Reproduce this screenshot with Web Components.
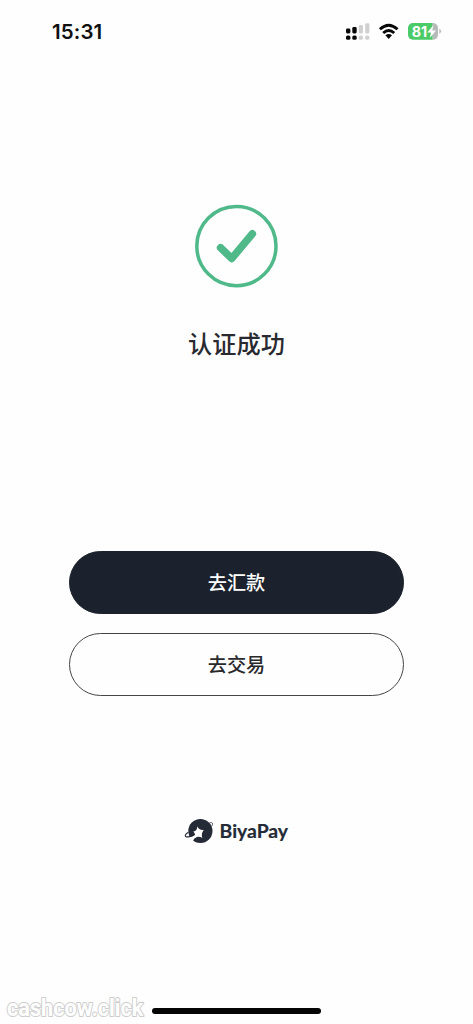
<!DOCTYPE html>
<html lang="zh-CN">
<head>
<meta charset="utf-8">
<title>BiyaPay</title>
<style>
html,body{margin:0;height:100%;background:#fefefe}
body{font-family:Inter,"Noto Sans CJK SC",sans-serif;overflow:hidden}
</style>
</head>
<body>
<result-screen></result-screen>
<script>
const define = (name, html) => customElements.define(name, class extends HTMLElement {
  constructor() {
    super();
    const t = document.createElement('template');
    t.innerHTML = html;
    this.attachShadow({mode: 'open'}).append(t.content.cloneNode(true));
  }
});

define('status-bar', `
<style>
:host{display:flex;justify-content:space-between;align-items:center;height:64px;padding:0 31px 0 52px;box-sizing:border-box}
time{font:600 20.5px/24px Inter,sans-serif;color:#111;letter-spacing:.1px}
.icons{display:flex;align-items:center}
svg{display:block}
</style>
<time>15:31</time>
<div class="icons">
<svg width="97" height="24" viewBox="345 20 97 24">
  <g fill="#080808"><rect x="346" y="28.5" width="4.4" height="5" rx="1.4"/><rect x="352.3" y="27" width="4.4" height="6.5" rx="1.4"/><rect x="346" y="35.4" width="4.4" height="4.4" rx="1.6"/><rect x="352.3" y="35.4" width="4.4" height="4.4" rx="1.6"/></g>
  <g fill="#d0d0d0"><rect x="358.8" y="25" width="4.2" height="8.5" rx="1.4"/><rect x="365.2" y="23.2" width="4.2" height="10.3" rx="1.4"/><rect x="358.8" y="35.4" width="4.2" height="4.4" rx="1.6"/><rect x="365.2" y="35.4" width="4.2" height="4.4" rx="1.6"/></g>
  <g fill="none" stroke="#080808" stroke-width="2.9"><path d="M379.9 29.3Q388.7 21 397.5 29.3"/><path d="M383.2 33Q388.7 28 394.2 33"/></g>
  <path d="M385.4 35.2Q388.7 32.6 392 35.2L388.7 38.9Z" fill="#080808"/>
  <clipPath id="c"><rect x="408" y="23" width="30" height="16.8" rx="5"/></clipPath>
  <g clip-path="url(#c)"><path fill="#4bca68" d="M408 23h24.7v17H408z"/><path fill="#b8bab9" d="M432.7 23h6v17h-6z"/></g>
  <path d="M439.2 28.8q2 .6 2 2.5t-2 2.5z" fill="#c2c2c2"/>
  <text x="411.8" y="36.7" font-family="Inter,sans-serif" font-size="14.5" font-weight="700" fill="#fff" textLength="15.5" lengthAdjust="spacingAndGlyphs">81</text>
  <path d="M433.3 25.2L427.3 32.4H431L429.8 38L436 30.4H432.3Z" fill="#fff"/>
</svg>
</div>`);

define('success-mark', `
<style>:host{display:block;width:85px;height:84px}svg{display:block}</style>
<svg width="85" height="84" viewBox="-.4 -.1 85 84" fill="none" stroke="#4fb98a">
  <circle cx="42" cy="42" r="39.6" stroke-width="3.5"/>
  <path d="M26.2 43.7L37.4 54.3L57.9 29.8" stroke-width="7.6" stroke-linecap="round" stroke-linejoin="round"/>
</svg>`);

define('pill-button', `
<style>
:host{display:block;width:335px;height:63px}
button{all:unset;box-sizing:border-box;display:flex;align-items:center;justify-content:center;width:100%;height:100%;padding-bottom:2px;border:1px solid #444548;border-radius:32px;color:#29292c;font:500 19.2px/28px "Noto Sans CJK SC",sans-serif;cursor:pointer}
:host([primary]) button{background:#1b222d;border-color:#1b222d;color:#fff}
</style>
<button><slot></slot></button>`);

define('brand-logo', `
<style>:host{display:block;width:106px;height:30px}svg{display:block}</style>
<svg width="106" height="30" viewBox="184 816 106 30">
  <circle cx="200.4" cy="831" r="12.1" fill="#242a36"/>
  <path d="M194.4 834.8L197.5 836.6L194.4 838.6L192.3 842L186.5 838.4L189.3 836.7Q192.6 836.2 194.4 834.8Z" fill="#fefefe"/>
  <path d="M188.3 832.2C184.3 834.6 184.2 837.3 188.4 836.9C191 836.6 193.2 835.6 195 834.2" fill="none" stroke="#242a36" stroke-width="1.2"/>
  <path d="M209.3 823.1C212.4 821.7 213.5 823.2 211.6 826.4" fill="none" stroke="#242a36" stroke-width=".8"/>
  <path d="M197.3 826.3Q198.8 830.4 203.8 829.9Q200.9 833 202.3 838Q198.8 835.6 194.4 838Q196.2 834.7 193.3 831.6Q197.4 831.2 197.3 826.3Z" fill="#fefefe"/>
  <text x="219.6" y="837.8" font-family="Lato,sans-serif" font-size="18" font-weight="700" fill="#242a36" stroke="#242a36" stroke-width=".2" textLength="68.5" lengthAdjust="spacingAndGlyphs">BiyaPay</text>
</svg>`);

define('home-indicator', `
<style>:host{display:block;width:169px;height:6px;border-radius:3px;background:#050505}</style>`);

define('water-mark', `
<style>:host{display:block}svg{display:block}</style>
<svg width="152" height="30" viewBox="0 994 152 30">
  <text transform="translate(7 1015.6) scale(.88 1)" font-family="Roboto,sans-serif" font-size="23.5" font-weight="700" fill="#fff" stroke="#cdcdcd" stroke-width="2" stroke-linejoin="round" paint-order="stroke" textLength="155" lengthAdjust="spacingAndGlyphs">cashcow.click</text>
</svg>`);

define('result-screen', `
<style>
:host{display:flex;flex-direction:column;width:473px;height:1024px;background:#fefefe}
main{flex:1;display:flex;flex-direction:column;align-items:center;padding-top:140px}
h1{margin:37px 0 0;font:500 24.2px/36px "Noto Sans CJK SC",sans-serif;color:#292a30}
.actions{display:flex;flex-direction:column;gap:19px;margin-top:190px}
brand-logo{margin-top:120px}
footer{display:flex;height:30px}
home-indicator{margin-top:14px}
</style>
<status-bar></status-bar>
<main>
  <success-mark></success-mark>
  <h1>认证成功</h1>
  <div class="actions">
    <pill-button primary>去汇款</pill-button>
    <pill-button>去交易</pill-button>
  </div>
  <brand-logo></brand-logo>
</main>
<footer><water-mark></water-mark><home-indicator></home-indicator></footer>`);
</script>
</body>
</html>
